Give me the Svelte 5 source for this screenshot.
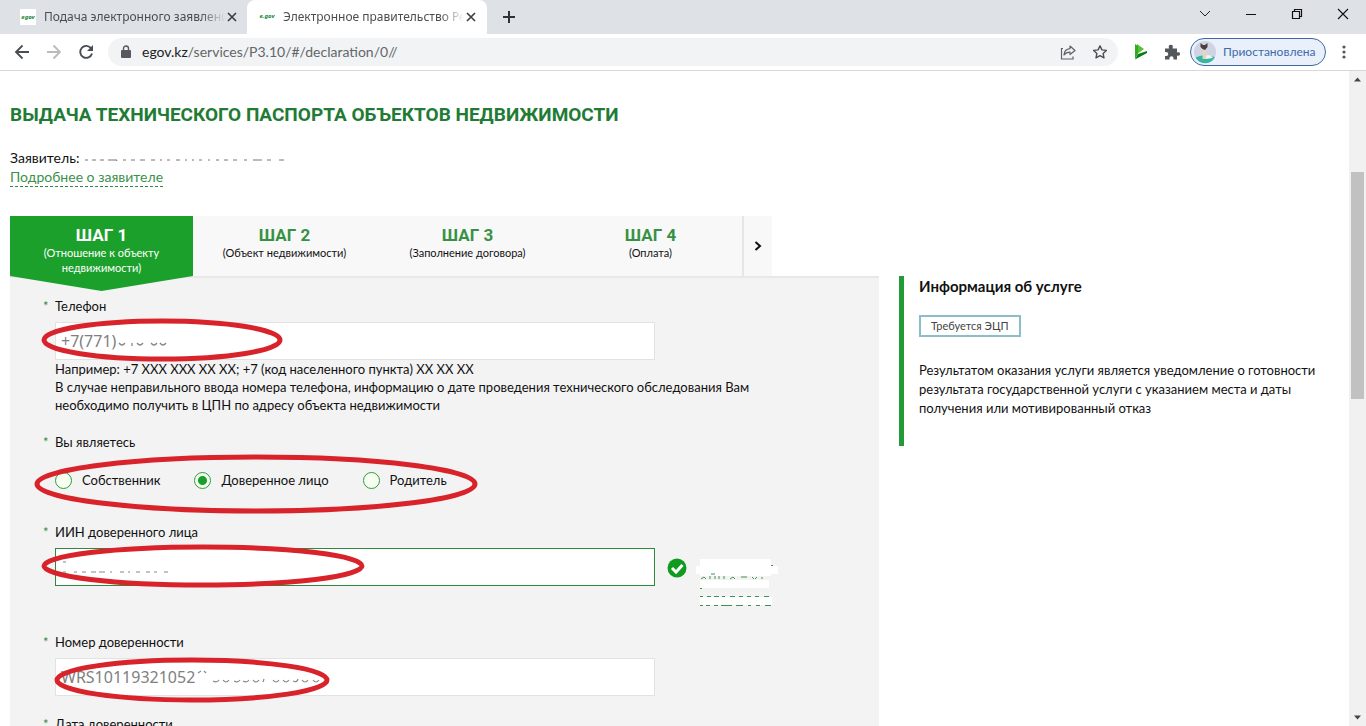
<script>
    const steps = [
        { title: 'ШАГ 1', note: '(Отношение к объекту недвижимости)' },
        { title: 'ШАГ 2', note: '(Объект недвижимости)' },
        { title: 'ШАГ 3', note: '(Заполнение договора)' },
        { title: 'ШАГ 4', note: '(Оплата)' },
    ];
    const roles = ['Собственник', 'Доверенное лицо', 'Родитель'];

    let currentStep = $state(0);
    let role = $state('Доверенное лицо');
    let url = $state('egov.kz/services/P3.10/#/declaration/0//');
    let phone = $state('+7(771)');
    let iin = $state('');
    let docNumber = $state('WRS10119321052');
</script>

<div class="window">
    <header>
        <div class="tabs">
            <div class="tab">
                <svg class="favicon" viewBox="0 0 16 16"><rect width="16" height="16" fill="#fff" /><text x="8" y="10" class="fav-text">egov</text></svg>
                <span class="tab-title">Подача электронного заявлени</span>
                <button class="icon-btn" aria-label="Закрыть вкладку">
                    <svg width="10" height="10" viewBox="0 0 10 10"><path d="M1 1l8 8M9 1L1 9" stroke="#3c4043" stroke-width="1.7" /></svg>
                </button>
            </div>
            <div class="tab active">
                <svg class="favicon" viewBox="0 0 16 16"><text x="8" y="9" class="fav-text">e.gov</text></svg>
                <span class="tab-title">Электронное правительство Ре</span>
                <button class="icon-btn" aria-label="Закрыть вкладку">
                    <svg width="10" height="10" viewBox="0 0 10 10"><path d="M1 1l8 8M9 1L1 9" stroke="#3c4043" stroke-width="1.7" /></svg>
                </button>
            </div>
            <button class="icon-btn new-tab" aria-label="Новая вкладка">
                <svg width="12" height="12" viewBox="0 0 12 12"><path d="M6 0v12M0 6h12" stroke="#2f3236" stroke-width="2" /></svg>
            </button>
            <div class="window-buttons">
                <button class="icon-btn" aria-label="Поиск вкладок"><svg width="12" height="12" viewBox="0 0 12 12"><path d="M1 3l5 5 5-5" fill="none" stroke="#222" /></svg></button>
                <button class="icon-btn" aria-label="Свернуть"><svg width="12" height="12" viewBox="0 0 12 12"><path d="M1 6.500h10" stroke="#111" /></svg></button>
                <button class="icon-btn" aria-label="Восстановить"><svg width="12" height="12" viewBox="0 0 12 12"><path d="M1.500 3.500h7v7h-7zM3.500 3.500v-2h7v7h-2" fill="none" stroke="#111" stroke-width="1.200" /></svg></button>
                <button class="icon-btn" aria-label="Закрыть"><svg width="12" height="12" viewBox="0 0 12 12"><path d="M1 1l10 10M11 1L1 11" stroke="#111" stroke-width="1.100" /></svg></button>
            </div>
        </div>

        <div class="toolbar">
            <button class="icon-btn" aria-label="Назад"><svg width="16" height="16" viewBox="0 0 16 16"><path d="M15 8H2M8.500 1.500L2 8l6.500 6.500" fill="none" stroke="#4a4d51" stroke-width="1.800" /></svg></button>
            <button class="icon-btn" aria-label="Вперёд"><svg width="16" height="16" viewBox="0 0 16 16"><path d="M1 8h13M7.500 1.500L14 8l-6.500 6.500" fill="none" stroke="#b9bbbe" stroke-width="1.800" /></svg></button>
            <button class="icon-btn" aria-label="Обновить"><svg width="16" height="16" viewBox="0 0 16 16"><path d="M13.200 4.500A6 6 0 1 0 14 9.500" fill="none" stroke="#4a4d51" stroke-width="1.900" /><path d="M15 1v6H9z" fill="#4a4d51" /></svg></button>
            <div class="address">
                <svg width="10" height="14" viewBox="0 0 10 14"><rect y="5" width="10" height="8" rx="1" fill="#55585c" /><path d="M2.500 5V3.500a2.500 2.500 0 0 1 5 0V5" fill="none" stroke="#55585c" stroke-width="1.400" /></svg>
                <div class="url-wrap">
                    <input class="url" aria-label="Адрес" bind:value={url} />
                    <span class="domain" aria-hidden="true">egov.kz</span>
                </div>
                <button class="icon-btn" aria-label="Поделиться"><svg width="16" height="16" viewBox="0 0 16 16"><path d="M3 4.500H1.500V15H13v-2.500" fill="none" stroke="#5f6368" stroke-width="1.200" /><path d="M10 2l5 4.500-5 4V8.200C7 8.200 5.300 9.200 4 11 4.200 7.500 6.200 5 10 4.600z" fill="none" stroke="#5f6368" stroke-width="1.200" stroke-linejoin="round" /></svg></button>
                <button class="icon-btn" aria-label="В закладки"><svg width="16" height="16" viewBox="0 0 16 16"><path d="M8 1.800l1.900 4.100 4.500.500-3.300 3 .9 4.400L8 11.600l-4 2.200.9-4.400-3.300-3 4.500-.5z" fill="none" stroke="#4a4d51" stroke-width="1.400" stroke-linejoin="round" /></svg></button>
            </div>
            <button class="icon-btn" aria-label="Расширение"><svg width="14" height="16" viewBox="0 0 14 16"><path d="M3 0l7 5-7 5z" fill="#5bc22f" /><path d="M1 0l3 2v8l-3 5z" fill="#2fae24" /><path d="M1 15.500L4 10l9-3v2z" fill="#087c18" /></svg></button>
            <button class="icon-btn" aria-label="Расширения"><svg width="16" height="16" viewBox="0 0 16 16"><path d="M1 4.500h4C4.300 1.500 5 .8 6.800.8S9.300 1.500 8.600 4.500H13v4c2-.5 3-.1 3 1.500s-1 2-3 1.500V15.500H9.500c.3-2.500-.6-3.300-2-3.300s-2.300.8-2 3.300H1V12c2.500.2 3.200-.7 3.200-2S3.500 7.800 1 8z" fill="#54575b" /></svg></button>
            <button class="profile">
                <svg width="24" height="24" viewBox="0 0 24 24"><circle cx="12" cy="12" r="11" fill="#cfd3e3" /><path d="M2.500 17.500C8 14.500 15 15 22 17a11 11 0 0 1-19.500.5z" fill="#35b5a4" /><path d="M12 16c3-2 6-1 8 2l-7 1z" fill="#f1f3ee" /><path d="M10 9h3v10H9.500z" fill="#e6d5b8" /><path d="M7.500 3l2.500 2h2l2.500-2v4L12 10l-2.500-1L7.500 7z" fill="#4b3d3b" /></svg>
                <span>Приостановлена</span>
            </button>
            <button class="icon-btn" aria-label="Меню"><svg width="4" height="14" viewBox="0 0 4 14"><circle cx="2" cy="2" r="1.600" fill="#54575b" /><circle cx="2" cy="7" r="1.600" fill="#54575b" /><circle cx="2" cy="12" r="1.600" fill="#54575b" /></svg></button>
        </div>
    </header>

    <div class="viewport">
        <main>
            <h1>ВЫДАЧА ТЕХНИЧЕСКОГО ПАСПОРТА ОБЪЕКТОВ НЕДВИЖИМОСТИ</h1>
            <p class="applicant">
                Заявитель:
                <svg width="210" height="6" viewBox="0 0 210 6"><path d="M2 5h3M9 5h4M17 5h4M25 5h9l-1 2M40 5h3M48 5h4M57 5h5M68 5h4M77 5h2M84 5h3M93 5h4M102 5h2M109 5h2M116 5h3M125 5h2M133 5h3M141 5h4M150 5h4M161 5h3M170 5h9M184 5h4M196 5h5" fill="none" stroke="#777" /></svg>
            </p>
            <a class="more" href="#applicant">Подробнее о заявителе</a>

            <div class="columns">
                <section>
                    <nav>
                        {#each steps as step, i}
                            <button class="step" class:current={i == currentStep} onclick={() => (currentStep = i)}>
                                <strong>{step.title}</strong>
                                <span>{step.note}</span>
                            </button>
                        {/each}
                        <button class="next" aria-label="Следующий шаг">
                            <svg width="8" height="10" viewBox="0 0 8 10"><path d="M1.500 1l4.500 4-4.500 4" fill="none" stroke="#111" stroke-width="2" /></svg>
                        </button>
                    </nav>

                    <form>
                        <div class="group">
                            <label for="phone">Телефон</label>
                            <div class="field">
                                <input id="phone" bind:value={phone} />
                                <svg class="marks" width="60" height="18" viewBox="0 0 60 18"><path d="M2 11q3 4 6 0M15 11v3M20 11q3 4 6 0M34 11q3 4 6 0M43 11q3 4 6 0" fill="none" stroke="#888" stroke-width="1.300" /></svg>
                                <svg class="ring" width="242" height="44"><ellipse cx="121" cy="22" rx="118" ry="19" /></svg>
                            </div>
                            <p class="hint">
                                Например: +7 XXX XXX XX XX; +7 (код населенного пункта) XX XX XX<br />
                                В случае неправильного ввода номера телефона, информацию о дате проведения технического обследования Вам необходимо получить в ЦПН по адресу объекта недвижимости
                            </p>
                        </div>

                        <fieldset class="group">
                            <legend>Вы являетесь</legend>
                            <div class="roles">
                                {#each roles as name}
                                    <label class="role"><input type="radio" name="role" value={name} bind:group={role} />{name}</label>
                                {/each}
                                <svg class="ring wide" width="444" height="60"><ellipse cx="222" cy="30" rx="219" ry="27" /></svg>
                            </div>
                        </fieldset>

                        <div class="group">
                            <label for="iin">ИИН доверенного лица</label>
                            <div class="field checked">
                                <input id="iin" class="valid" bind:value={iin} />
                                <svg class="marks start" width="120" height="18" viewBox="0 0 120 18"><path d="M2 4h3M2 14h3M13 14h3M21 14h4M30 14h5M38 14h6M49 14h2M59 14h4M67 14h2M75 14h4M85 14h4M93 14h3M103 14h4" stroke="#888" /></svg>
                                <svg class="status" width="20" height="20" viewBox="0 0 20 20"><circle cx="10" cy="10" r="9.500" fill="#119a20" /><path d="M5 10l4 4 6.500-7" fill="none" stroke="#fff" stroke-width="3" /></svg>
                                <svg class="status" width="84" height="50" viewBox="0 0 84 50"><path d="M5 1h71v7h7v8H76v2H5v-2H1V8h4zM5 22h69v8H5zM5 39h72v8H5z" fill="#fff" /><path d="M6 21l3-2 2 2M15 21v-3M20 21v-3M24 21v-3M29 21v-3M35 21l3-2 2 2M46 19h6M57 19l2 2M62 19l-2 2M67 19v2M16 16h4M5 38.500h3M12 38.500h4M19 38.500h5M27 38.500h3M35 38.500h5M44 38.500h4M52 38.500h4M60 38.500h4M69 38.500h5M5 47.500h3M11 47.500h4M19 47.500h4M26 47.500h11M41 47.500h7M53 47.500h3M61 47.500h4M70 47.500h6M76 7.500h2M5 30.500h2" fill="none" stroke="#3f9350" /></svg>
                                <svg class="ring" width="324" height="44"><ellipse cx="162" cy="22" rx="159" ry="19" /></svg>
                            </div>
                        </div>

                        <div class="group">
                            <label for="doc">Номер доверенности</label>
                            <div class="field">
                                <input id="doc" bind:value={docNumber} />
                                <svg class="marks number" width="130" height="18" viewBox="0 0 130 18"><path d="M2 5l3-2M8 3l2 2M17 13q4 2 6-1M27 12q3 4 6 0M38 13q4 2 6-1M47 13q4 2 6-1M57 12q3 4 6 0M68 11l-1 3M77 12q3 4 6 0M87 12q3 4 6 0M97 13q4 2 5-2M106 12q3 4 6 0M117 12q3 4 6 0" fill="none" stroke="#888" stroke-width="1.200" /></svg>
                                <svg class="ring low" width="278" height="46"><ellipse cx="139" cy="23" rx="135" ry="20" /></svg>
                            </div>
                        </div>

                        <div class="group">
                            <label for="date">Дата доверенности</label>
                            <div class="field"><input id="date" /></div>
                        </div>
                    </form>
                </section>

                <aside>
                    <h2>Информация об услуге</h2>
                    <span class="badge">Требуется ЭЦП</span>
                    <p>Результатом оказания услуги является уведомление о готовности результата государственной услуги с указанием места и даты получения или мотивированный отказ</p>
                </aside>
            </div>
        </main>

        <div class="scrollbar">
            <svg width="17" height="17" viewBox="0 0 17 17"><path d="M5 10.500l3.500-4 3.500 4z" fill="#444" /></svg>
            <div class="track"><div class="thumb"></div></div>
            <svg width="17" height="17" viewBox="0 0 17 17"><path d="M5 6.500l3.500 4 3.500-4z" fill="#444" /></svg>
        </div>
    </div>
</div>

<style>
    :global(body) {
        margin: 0;
        background: #fff;
    }

    .window {
        display: flex;
        flex-direction: column;
        height: 100vh;
        overflow: hidden;
        font: 13px/18px Lato, "Noto Sans", sans-serif;
        color: #111;
    }

    .window * {
        box-sizing: border-box;
    }

    svg {
        display: block;
        flex: none;
    }

    button {
        font: inherit;
        color: inherit;
        padding: 0;
        border: none;
        background: none;
        cursor: pointer;
    }

    .icon-btn {
        display: flex;
        flex: none;
        align-items: center;
        justify-content: center;
    }

    .tabs {
        display: flex;
        height: 34px;
        background: #dee1e6;
    }

    .tab {
        display: flex;
        align-items: center;
        gap: 8px;
        width: 247px;
        padding: 0 10px 0 20px;
        font: 12px/18px "Noto Sans", sans-serif;
        color: #4a4d51;
    }

    .tab.active {
        width: 240px;
        padding: 0 11px 0 12px;
        background: #fff;
        border-radius: 8px 8px 0 0;
    }

    .favicon {
        width: 16px;
        height: 16px;
    }

    .fav-text {
        font: italic bold 6px "Noto Sans", sans-serif;
        fill: #16863a;
        text-anchor: middle;
    }

    .tab-title {
        flex: 1;
        margin-right: -6px;
        overflow: hidden;
        white-space: nowrap;
        mask-image: linear-gradient(to left, transparent, #000 24px);
    }

    .new-tab {
        width: 44px;
    }

    .window-buttons {
        display: flex;
        gap: 34px;
        margin-left: auto;
        padding: 0 17px 6px 0;
    }

    .toolbar {
        display: flex;
        align-items: center;
        gap: 16px;
        height: 37px;
        padding: 0 20px 0 14px;
        border-bottom: 1px solid #d5d7da;
    }

    .address {
        display: flex;
        flex: 1;
        align-items: center;
        gap: 16px;
        height: 28px;
        margin-left: -2px;
        padding: 0 10px 0 13px;
        border-radius: 14px;
        background: #f1f3f4;
    }

    .url-wrap {
        position: relative;
        flex: 1;
        margin-left: -5px;
        font: 14px/20px Lato, "Noto Sans", sans-serif;
    }

    .url {
        display: block;
        width: 100%;
        padding: 0;
        border: none;
        outline: none;
        background: none;
        font: inherit;
        color: #63666a;
    }

    .domain {
        position: absolute;
        top: 0;
        left: 0;
        background: #f1f3f4;
        color: #202124;
        pointer-events: none;
    }

    .profile {
        display: flex;
        align-items: center;
        gap: 6px;
        width: 136px;
        height: 28px;
        margin-left: -6px;
        padding: 0 2px;
        border: 1px solid #3c6aa0;
        border-radius: 14px;
        background: #e9f0fb;
        color: #3b6ca8;
        font-size: 12px;
    }

    .viewport {
        display: flex;
        flex: 1;
        min-height: 0;
    }

    main {
        flex: 1;
        padding: 31px 20px 0 10px;
        overflow: hidden;
    }

    h1 {
        margin: 0 0 21px;
        font: bold 19px/26px Roboto, sans-serif;
        color: #217b35;
    }

    .applicant {
        display: flex;
        align-items: center;
        gap: 4px;
        margin: 0;
        font-size: 14px;
    }

    .more {
        display: inline-block;
        border-bottom: 1px dashed #2f8a41;
        font-size: 14px;
        line-height: 19px;
        color: #3a914a;
        text-decoration: none;
    }

    .columns {
        display: grid;
        grid-template-columns: 869fr 430fr;
        gap: 20px;
        margin-top: 29px;
    }

    nav {
        display: flex;
        width: 762px;
        height: 60px;
        background: #f8f8f8;
    }

    .step {
        display: flex;
        flex: 1;
        flex-direction: column;
        align-items: center;
        padding: 9px 24px 0;
        font-size: 11px;
        line-height: 15px;
    }

    .step strong {
        font: bold 17px/20px Roboto, sans-serif;
        color: #379144;
    }

    .step.current {
        height: 75px;
        z-index: 1;
        background: #1ba12b;
        color: #fff;
        clip-path: polygon(0 0, 100% 0, 100% 60px, 50% 100%, 0 60px);
    }

    .step.current strong {
        color: #fff;
    }

    .next {
        display: flex;
        align-items: center;
        justify-content: center;
        width: 30px;
        border-left: 2px solid #e6e6e6;
    }

    form {
        display: flex;
        flex-direction: column;
        gap: 19px;
        padding: 19px 45px;
        border-top: 2px solid #e8e8e8;
        background: #f3f3f3;
    }

    .group {
        min-width: 0;
        margin: 0;
        padding: 0;
        border: none;
    }

    .group > label,
    legend {
        position: relative;
        display: block;
        margin-bottom: 7px;
        padding: 0;
    }

    .group > label::before,
    legend::before {
        content: "*";
        position: absolute;
        left: -12px;
        color: #2f8a41;
    }

    .field {
        position: relative;
        display: flex;
        align-items: center;
    }

    .field input {
        width: 600px;
        height: 38px;
        padding: 0 5px;
        border: 1px solid #e2e2e2;
        outline: none;
        background: #fff;
        font: 16px/20px "Noto Sans", sans-serif;
        color: #808080;
    }

    .field input.valid {
        border-color: #2c8a3c;
    }

    .checked {
        gap: 12px;
        height: 66px;
        align-items: flex-start;
    }

    .status {
        margin: 10px -4px 0 0;
    }

    .marks {
        position: absolute;
        top: 10px;
        left: 62px;
    }

    .marks.start {
        left: 6px;
    }

    .marks.number {
        left: 141px;
    }

    .ring {
        position: absolute;
        top: -4px;
        left: -14px;
        fill: none;
        stroke: #d9232b;
        stroke-width: 5px;
        pointer-events: none;
    }

    .ring.wide {
        top: -4px;
        left: -21px;
    }

    .ring.low {
        top: -1px;
        left: -2px;
    }

    .hint {
        max-width: 720px;
        margin: 0;
    }

    .roles {
        position: relative;
        display: flex;
        gap: 34px;
        padding: 13px 0 15px;
    }

    .role {
        display: flex;
        align-items: center;
        gap: 10px;
    }

    .role input {
        appearance: none;
        width: 17px;
        height: 17px;
        margin: 0;
        border: 1px solid #2c9a3e;
        border-radius: 50%;
        background: #f6fff0;
    }

    .role input:checked {
        background: radial-gradient(circle, #17a02c 4px, #f6fff0 5px);
    }

    aside {
        align-self: start;
        margin-top: 60px;
        min-height: 170px;
        padding-left: 15px;
        border-left: 5px solid #239a36;
    }

    h2 {
        margin: 0 0 19px;
        font-size: 15px;
        line-height: 20px;
    }

    .badge {
        display: inline-block;
        padding: 0 10px;
        border: 2px solid #8dbccb;
        font-size: 11px;
        color: #444;
    }

    aside p {
        margin: 24px 0 0;
        line-height: 19px;
    }

    .scrollbar {
        display: flex;
        flex-direction: column;
        width: 17px;
        background: #f1f1f1;
    }

    .track {
        flex: 1;
        padding: 84px 2px 0;
    }

    .thumb {
        height: 227px;
        background: #c1c1c1;
    }
</style>
